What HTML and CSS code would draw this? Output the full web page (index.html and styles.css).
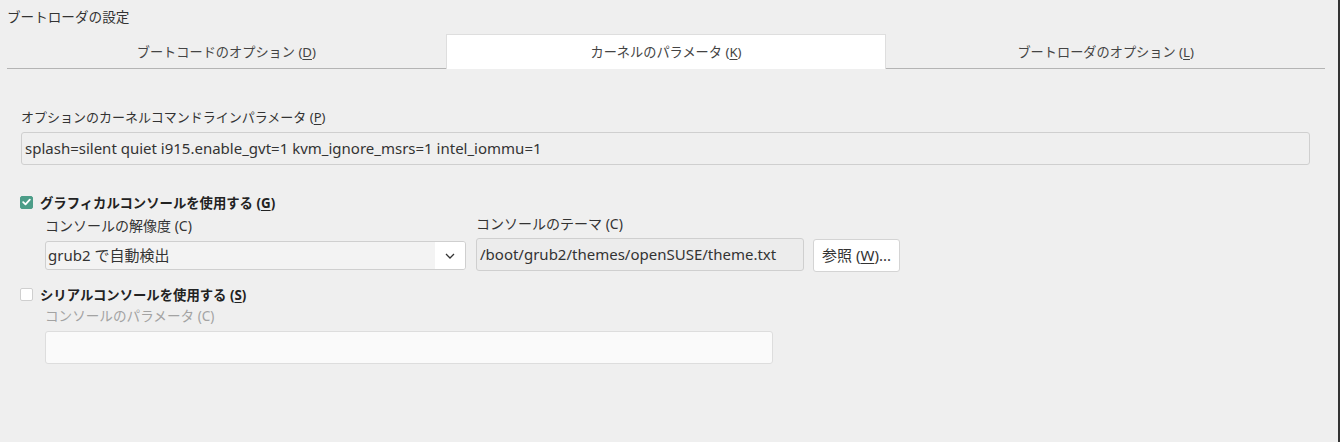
FILE: index.html
```html
<!DOCTYPE html>
<html lang="ja">
<head>
<meta charset="utf-8">
<title>ブートローダの設定</title>
<link rel="stylesheet" href="styles.css">
</head>
<body>
<div class="page">
  <div class="main">
    <div class="title">ブートローダの設定</div>
    <div class="tabs">
      <div class="tab">ブートコードのオプション (<u>D</u>)</div>
      <div class="tab active">カーネルのパラメータ (<u>K</u>)</div>
      <div class="tab">ブートローダのオプション (<u>L</u>)</div>
    </div>
    <div class="content">
      <div class="label label-p">オプションのカーネルコマンドラインパラメータ (<u>P</u>)</div>
      <div class="field field-wide">splash=silent quiet i915.enable_gvt=1 kvm_ignore_msrs=1 intel_iommu=1</div>

      <div class="check-row check-graphic">
        <span class="checkbox checked">
          <svg width="9" height="8" viewBox="0 0 9 8"><path d="M1.2 4.2 L3.5 6.4 L7.8 1.6" fill="none" stroke="#fff" stroke-width="1.8" stroke-linecap="round" stroke-linejoin="round"/></svg>
        </span>
        <span class="check-label">グラフィカルコンソールを使用する (<u>G</u>)</span>
      </div>
      <div class="sub-group">
        <div class="col col-res">
          <div class="label label-sub">コンソールの解像度 (C)</div>
          <div class="select">
            <span class="select-text">grub2 で自動検出</span>
            <span class="select-arrow">
              <svg width="10" height="6" viewBox="0 0 10 6"><path d="M1 1 L5 5 L9 1" fill="none" stroke="#333" stroke-width="1.3"/></svg>
            </span>
          </div>
        </div>
        <div class="col col-theme">
          <div class="label label-sub">コンソールのテーマ (C)</div>
          <div class="theme-row">
            <div class="field field-theme">/boot/grub2/themes/openSUSE/theme.txt</div>
            <div class="button">参照 (<u>W</u>)...</div>
          </div>
        </div>
      </div>

      <div class="check-row check-serial">
        <span class="checkbox"></span>
        <span class="check-label">シリアルコンソールを使用する (<u>S</u>)</span>
      </div>
      <div class="sub-serial">
        <div class="label disabled">コンソールのパラメータ (C)</div>
        <div class="field field-disabled"></div>
      </div>
    </div>
  </div>
  <div class="edge"></div>
</div>
</body>
</html>
```

FILE: styles.css
```css
html, body {
  margin: 0;
  padding: 0;
  height: 100%;
}
body {
  background: #efefef;
  font-family: "Noto Sans", "Noto Sans CJK JP", sans-serif;
  font-size: 13px;
  color: #333;
}
.page {
  display: flex;
  height: 442px;
  overflow: hidden;
}
.main {
  flex: 1;
}
.edge {
  width: 2px;
  background: #333;
}
u {
  text-decoration: underline;
  text-underline-offset: 2px;
}
.title {
  height: 34px;
  line-height: 34px;
  padding-left: 7px;
  font-size: 13.6px;
  color: #333;
}
.tabs {
  display: flex;
  margin: 0 13px 0 7px;
  height: 35px;
}
.tab {
  flex: 1;
  text-align: center;
  line-height: 36px;
  color: #444;
  border-bottom: 1px solid #b4b4b4;
  box-sizing: border-box;
  height: 35px;
  font-size: 13.2px;
}
.tab.active {
  background: #fff;
  border: 1px solid #dedede;
  border-bottom: none;
  line-height: 34px;
}
.content {
  padding: 39px 0 0 21px;
}
.label {
  line-height: 18px;
  height: 18px;
  color: #333;
  white-space: nowrap;
}
.label-sub {
  font-size: 14px;
}
.field {
  box-sizing: border-box;
  height: 33px;
  line-height: 31px;
  border: 1px solid #cfcfcf;
  border-radius: 3px;
  padding-left: 3px;
  color: #333;
  margin-top: 6px;
  white-space: nowrap;
  overflow: hidden;
}
.field-wide {
  width: 1289px;
  background: #efefef;
  font-size: 15px;
}
.check-row {
  display: flex;
  align-items: center;
  height: 18px;
  margin-left: -1px;
}
.check-graphic {
  margin-top: 28px;
}
.check-serial {
  margin-top: 13px;
}
.checkbox {
  box-sizing: border-box;
  width: 13px;
  height: 13px;
  border-radius: 2px;
  border: 1px solid #cfcfcf;
  background: #fff;
  display: flex;
  align-items: center;
  justify-content: center;
  margin-right: 7px;
}
.checkbox.checked {
  background: #4c9d88;
  border-color: #4c9d88;
}
.check-label {
  font-weight: bold;
  color: #222;
  font-size: 13.35px;
}
.sub-group {
  display: flex;
  gap: 10px;
  padding-left: 24px;
}
.col-res {
  width: 421px;
  padding-top: 6px;
}
.col-theme {
  padding-top: 4px;
}
.select {
  box-sizing: border-box;
  margin-top: 6px;
  height: 29px;
  border: 1px solid #cfcfcf;
  border-radius: 3px;
  background: #f3f3f3;
  display: flex;
  overflow: hidden;
}
.select-text {
  flex: 1;
  line-height: 27px;
  padding-left: 2px;
  font-size: 15px;
}
.select-arrow {
  width: 30px;
  background: #fff;
  display: flex;
  align-items: center;
  justify-content: center;
}
.theme-row {
  display: flex;
  align-items: flex-start;
  gap: 9px;
}
.theme-row .field {
  margin-top: 5px;
}
.field-theme {
  width: 328px;
  background: #ececec;
  font-size: 15px;
}
.button {
  box-sizing: border-box;
  margin-top: 6px;
  width: 87px;
  height: 33px;
  line-height: 31px;
  background: #fff;
  border: 1px solid #d4d4d4;
  border-radius: 3px;
  text-align: center;
  color: #333;
  font-size: 15px;
}
.sub-serial {
  padding-left: 24px;
  padding-top: 4px;
}
.label.disabled {
  color: #a3a3a3;
  font-size: 13.6px;
}
.field-disabled {
  width: 728px;
  background: #fafafa;
  border-color: #dddddd;
}
```
